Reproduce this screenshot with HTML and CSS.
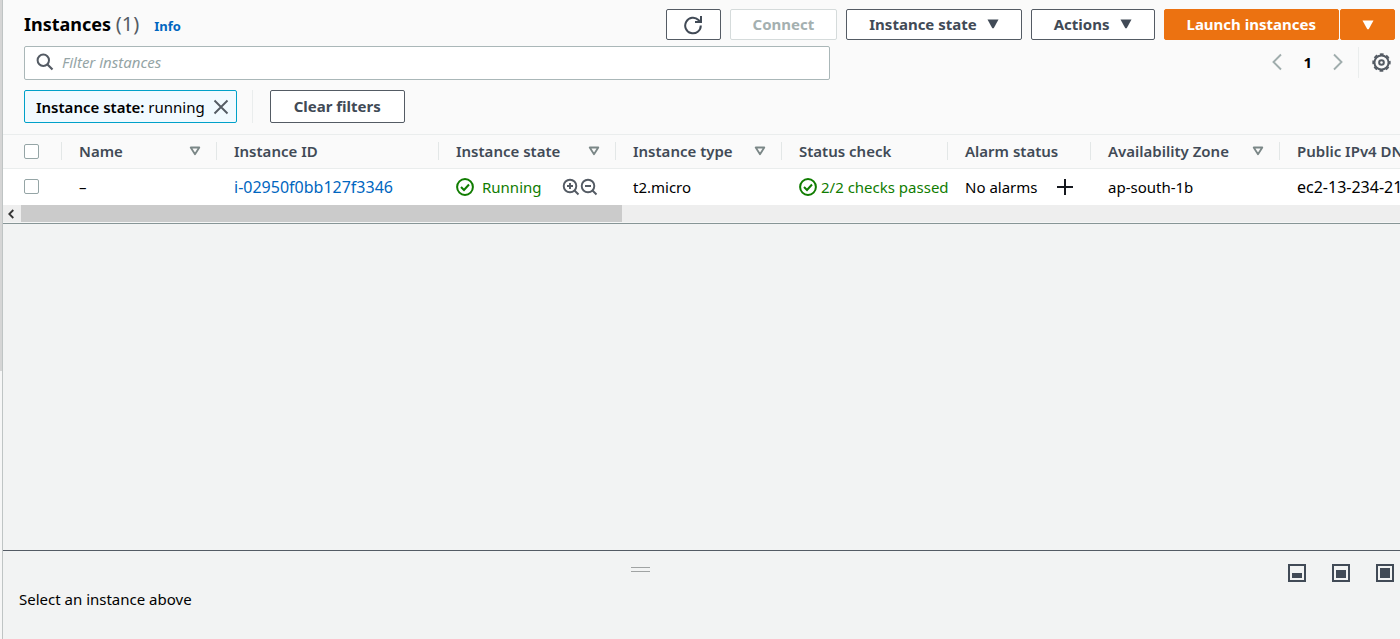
FILE: index.html
```html
<!DOCTYPE html>
<html lang="en">
<head>
<meta charset="utf-8">
<title>Instances</title>
<link rel="stylesheet" href="styles.css">
</head>
<body>
<svg class="sprite" aria-hidden="true">
  <symbol id="ok" viewBox="0 0 18 18"><circle cx="9" cy="9" r="7.900" fill="none" stroke="currentColor" stroke-width="2"/><path d="M5 9l3 3 5-5.500" fill="none" stroke="currentColor" stroke-width="2"/></symbol>
  <symbol id="sort" viewBox="0 0 12 10"><path d="M1.700 1.500h8.600L6 8.300z" fill="none" stroke="currentColor" stroke-width="1.800" stroke-linejoin="round"/></symbol>
  <symbol id="caret" viewBox="0 0 12 10"><path d="M.5 .5h11L6.700 9.200h-1.400z" fill="currentColor"/></symbol>
</svg>
<div class="frame">
  <div class="rail"></div>
  <main class="main">
    <header class="toolbar">
      <div class="title-row">
        <h1 class="title">Instances <span class="count">(1)</span></h1>
        <a class="info" href="#info">Info</a>
        <div class="actions">
          <button class="btn btn-icon" aria-label="Refresh">
            <svg class="refresh" viewBox="0 0 20 20"><path d="M17.800 10.500A7.800 7.800 0 1 1 15.500 5L17.500 6.500" fill="none" stroke="currentColor" stroke-width="2"/><path d="M18 1v6h-6" fill="none" stroke="currentColor" stroke-width="2"/></svg>
          </button>
          <button class="btn" disabled>Connect</button>
          <button class="btn">Instance state <svg class="caret"><use href="#caret"/></svg></button>
          <button class="btn">Actions <svg class="caret"><use href="#caret"/></svg></button>
          <div class="split">
            <button class="btn btn-primary">Launch instances</button>
            <button class="btn btn-primary btn-icon" aria-label="More launch options"><svg class="caret"><use href="#caret"/></svg></button>
          </div>
        </div>
      </div>
      <div class="search-row">
        <label class="search">
          <svg class="search-icon" viewBox="0 0 18 18"><circle cx="7.300" cy="7.300" r="5.700" fill="none" stroke="currentColor" stroke-width="2"/><path d="M11.500 11.500l5 5" stroke="currentColor" stroke-width="2.200"/></svg>
          <input class="search-input" type="text" placeholder="Filter instances" aria-label="Filter instances">
        </label>
        <nav class="pager" aria-label="Pages">
          <button class="plain faint" aria-label="Previous page"><svg class="chevron" viewBox="0 0 10 18"><path d="M9 1.500L1.500 9 9 16.500" fill="none" stroke="currentColor" stroke-width="1.900"/></svg></button>
          <button class="plain page">1</button>
          <button class="plain faint" aria-label="Next page"><svg class="chevron" viewBox="0 0 10 18"><path d="M1 1.500L8.500 9 1 16.500" fill="none" stroke="currentColor" stroke-width="1.900"/></svg></button>
          <span class="pager-line"></span>
          <button class="plain" aria-label="Preferences"><svg class="gear" viewBox="0 0 18 18"><circle cx="9" cy="9" r="6.700" fill="none" stroke="currentColor" stroke-width="1.900"/><circle cx="9" cy="9" r="7.900" fill="none" stroke="currentColor" stroke-width="1.600" stroke-dasharray="3.600 2.604" stroke-dashoffset="1.800"/><circle cx="9" cy="9" r="2.200" fill="none" stroke="currentColor" stroke-width="1.900"/></svg></button>
        </nav>
      </div>
      <div class="filter-row">
        <div class="token"><span><b>Instance state:</b> running</span>
          <button class="plain" aria-label="Remove filter"><svg class="close" viewBox="0 0 16 16"><path d="M1.500 1.500l13 13M14.500 1.500l-13 13" stroke="currentColor" stroke-width="1.900"/></svg></button>
        </div>
        <span class="filter-line"></span>
        <button class="btn">Clear filters</button>
      </div>
    </header>
    <section class="table-wrap">
      <table class="table">
        <colgroup><col class="c-check"><col class="c-name"><col class="c-id"><col class="c-state"><col class="c-type"><col class="c-status"><col class="c-alarm"><col class="c-zone"><col class="c-dns"></colgroup>
        <thead>
          <tr>
            <th><div class="th first"><input class="check" type="checkbox" aria-label="Select all"></div></th>
            <th><div class="th">Name<svg class="sort"><use href="#sort"/></svg></div></th>
            <th><div class="th">Instance ID</div></th>
            <th><div class="th">Instance state<svg class="sort"><use href="#sort"/></svg></div></th>
            <th><div class="th">Instance type<svg class="sort"><use href="#sort"/></svg></div></th>
            <th><div class="th">Status check</div></th>
            <th><div class="th">Alarm status</div></th>
            <th><div class="th">Availability Zone<svg class="sort"><use href="#sort"/></svg></div></th>
            <th><div class="th">Public IPv4 DNS</div></th>
          </tr>
        </thead>
        <tbody>
          <tr>
            <td><div class="td first"><input class="check" type="checkbox" aria-label="Select instance"></div></td>
            <td><div class="td">–</div></td>
            <td><div class="td ident"><a class="link" href="#instance">i-02950f0bb127f3346</a></div></td>
            <td><div class="td"><span class="ok ok-wide"><svg class="ok-icon"><use href="#ok"/></svg>Running</span>
              <span class="zooms">
                <button class="plain" aria-label="Include in filter"><svg class="mag" viewBox="0 0 18 18"><circle cx="8" cy="8" r="6.300" fill="none" stroke="currentColor" stroke-width="1.900"/><path d="M12.500 12.500l4 4M5 8h6M8 5v6" stroke="currentColor" stroke-width="1.900"/></svg></button>
                <button class="plain" aria-label="Exclude from filter"><svg class="mag" viewBox="0 0 18 18"><circle cx="8" cy="8" r="6.300" fill="none" stroke="currentColor" stroke-width="1.900"/><path d="M12.500 12.500l4 4M5 8h6" stroke="currentColor" stroke-width="1.900"/></svg></button>
              </span></div></td>
            <td><div class="td">t2.micro</div></td>
            <td><div class="td"><span class="ok"><svg class="ok-icon"><use href="#ok"/></svg>2/2 checks passed</span></div></td>
            <td><div class="td alarm">No alarms<button class="plain" aria-label="Add alarm"><svg class="plus" viewBox="0 0 16 16"><path d="M8 0v16M0 8h16" stroke="currentColor" stroke-width="2"/></svg></button></div></td>
            <td><div class="td">ap-south-1b</div></td>
            <td><div class="td ident">ec2-13-234-21</div></td>
          </tr>
        </tbody>
      </table>
      <div class="scrollbar">
        <button class="plain scroll-left" aria-label="Scroll left"><svg class="arrow" viewBox="0 0 6 10"><path d="M5.300 1L1.300 5l4 4" fill="none" stroke="currentColor" stroke-width="1.800"/></svg></button>
        <div class="thumb"></div>
      </div>
    </section>
    <section class="details">
      <div class="details-bar">
        <span class="grip"></span>
        <div class="sizes">
          <button class="plain" aria-label="Small panel"><svg class="panel" viewBox="0 0 18 18"><rect x="1" y="1" width="16" height="16" fill="none" stroke="currentColor" stroke-width="2"/><rect x="4" y="9" width="10" height="5" fill="currentColor"/></svg></button>
          <button class="plain" aria-label="Medium panel"><svg class="panel" viewBox="0 0 18 18"><rect x="1" y="1" width="16" height="16" fill="none" stroke="currentColor" stroke-width="2"/><rect x="4" y="6" width="10" height="8" fill="currentColor"/></svg></button>
          <button class="plain" aria-label="Large panel"><svg class="panel" viewBox="0 0 18 18"><rect x="1" y="1" width="16" height="16" fill="none" stroke="currentColor" stroke-width="2"/><rect x="4" y="4" width="10" height="10" fill="currentColor"/></svg></button>
        </div>
      </div>
      <p class="hint">Select an instance above</p>
    </section>
  </main>
</div>
</body>
</html>
```
FILE: styles.css
```css
* { box-sizing: border-box; }
body {
  margin: 0;
  font: 15px/20px "Noto Sans", "Open Sans", sans-serif;
  color: #000;
  background: #f2f3f3;
}
svg { display: block; flex: none; }
.sprite { width: 0; height: 0; position: absolute; }
.frame { display: flex; min-height: 100vh; overflow: hidden; }
.rail { flex: none; width: 2px; background: linear-gradient(#d5d5d5 371px, #f6f6f6 371px); }
.main {
  flex: 1;
  min-width: 0;
  display: flex;
  flex-direction: column;
  border-left: 1px solid #bfc4c4;
}
.plain {
  display: flex;
  align-items: center;
  padding: 0;
  border: 0;
  background: none;
  color: #545b64;
  font: inherit;
}

/* toolbar */
.toolbar {
  display: flex;
  flex-direction: column;
  padding: 9px 5px 11px 21px;
  background: #fafafa;
  border-bottom: 1px solid #eaeded;
}
.title-row { display: flex; align-items: center; height: 31px; }
.title { margin: 0; font-size: 18px; line-height: 28px; font-weight: 700; padding-bottom: 2px; }
.count { font-size: 20px; font-weight: 400; color: #545b64; }
.info { margin: 2px 0 0 15px; font-size: 13px; font-weight: 700; color: #0066c0; text-decoration: none; }
.actions { display: flex; gap: 9px; margin-left: auto; }
.btn {
  display: flex;
  align-items: center;
  justify-content: center;
  gap: 10px;
  height: 31px;
  padding: 0 22px 2px;
  border: 1px solid #545b64;
  border-radius: 2px;
  background: #fff;
  color: #414a56;
  font: 700 15px/20px "Noto Sans", "Open Sans", sans-serif;
  white-space: nowrap;
}
.btn:disabled { border-color: #d5dbdb; color: #a4b0b0; }
.btn-icon { width: 55px; padding: 0; }
.btn-primary { background: #ec7211; border-color: #ec7211; color: #fff; }
.split { display: flex; gap: 1px; }
.caret { width: 12px; height: 10px; }
.refresh { width: 20px; height: 20px; }

.search-row { display: flex; align-items: center; margin-top: 6px; }
.search {
  display: flex;
  align-items: center;
  flex: 0 1 806px;
  height: 34px;
  padding: 0 11px 2px;
  gap: 8px;
  border: 1px solid #aab7b8;
  border-radius: 2px;
  background: #fff;
  color: #545b64;
}
.search-icon { width: 18px; height: 18px; }
.search-input {
  flex: 1;
  min-width: 0;
  padding: 0;
  border: 0;
  outline: 0;
  background: none;
  font: inherit;
}
.search-input::placeholder { color: #95a5a6; font-style: italic; opacity: 1; }
.pager { display: flex; align-items: center; margin-left: auto; padding: 0 4px 2px 0; }
.faint { color: #a0adad; }
.chevron { width: 10px; height: 18px; }
.page { padding: 0 21px; color: #000; font-weight: 700; }
.pager-line { width: 1px; height: 31px; margin: 0 13px 0 15px; background: #eaeded; }
.gear { width: 19px; height: 19px; }

.filter-row { display: flex; align-items: center; margin-top: 10px; }
.token {
  display: flex;
  align-items: center;
  gap: 8px;
  height: 33px;
  padding: 0 7px 0 11px;
  border: 1px solid #00a1c9;
  border-radius: 2px;
  background: #f1faff;
}
.token b { font-weight: 600; }
.close { width: 16px; height: 16px; }
.filter-line { width: 1px; height: 33px; margin: 0 17px 0 15px; background: #eaeded; }
.filter-row .btn { height: 33px; padding: 0 23px 1px; }

/* table */
.table-wrap { overflow: hidden; border-bottom: 1px solid #879596; }
.table { width: 1500px; table-layout: fixed; border-collapse: collapse; text-align: left; }
.c-check { width: 59px; }
.c-name { width: 155px; }
.c-id { width: 222px; }
.c-state { width: 177px; }
.c-type, .c-status { width: 166px; }
.c-alarm { width: 143px; }
.c-zone { width: 189px; }
.table th, .table td { padding: 0; }
.table th { height: 33px; background: #fafafa; border-bottom: 1px solid #eaeded; }
.table td { height: 37px; background: #fff; }
.th, .td { display: flex; align-items: center; padding-left: 17px; white-space: nowrap; }
.th { justify-content: space-between; height: 18px; padding-right: 15px; border-right: 1px solid #e3e7e7; color: #414a56; font-weight: 600; }
.first { padding-left: 21px; }
.td { overflow: hidden; }
.ident { font-size: 16px; }
.check {
  appearance: none;
  width: 15px;
  height: 15px;
  margin: 0;
  border: 1px solid #95a5a6;
  border-radius: 2px;
  background: #fff;
}
.sort { width: 12px; height: 10px; color: #7b8787; }
.link { color: #0066c0; text-decoration: none; }
.ok { display: flex; align-items: center; gap: 4px; color: #107c00; }
.ok-wide { gap: 8px; }
.ok-icon { width: 18px; height: 18px; }
.zooms { display: flex; margin-left: auto; padding-right: 18px; }
.mag { width: 18px; height: 18px; }
.alarm { justify-content: space-between; padding-right: 18px; }
.plus { width: 16px; height: 16px; color: #16191f; }
.scrollbar { display: flex; height: 18px; background: #eee; border-bottom: 1px solid #f6f6f6; }
.scroll-left { justify-content: center; width: 18px; padding-right: 3px; color: #333; }
.arrow { width: 6px; height: 10px; }
.thumb { flex: 0 0 43%; background: #cbcbcb; }

/* details panel */
.details { height: 89px; margin-top: auto; border-top: 1px solid #545b64; }
.details-bar { display: grid; grid-template-columns: 11fr 20px 13fr; padding: 13px 6px 0 0; }
.grip { grid-column: 2; width: 19px; height: 5px; margin-top: 3px; border: solid #a0a3a3; border-width: 1px 0; }
.sizes { grid-column: 3; display: flex; justify-content: flex-end; gap: 26px; }
.panel { width: 18px; height: 18px; color: #414a56; }
.hint { margin: 7px 0 0; padding-left: 16px; }
```
